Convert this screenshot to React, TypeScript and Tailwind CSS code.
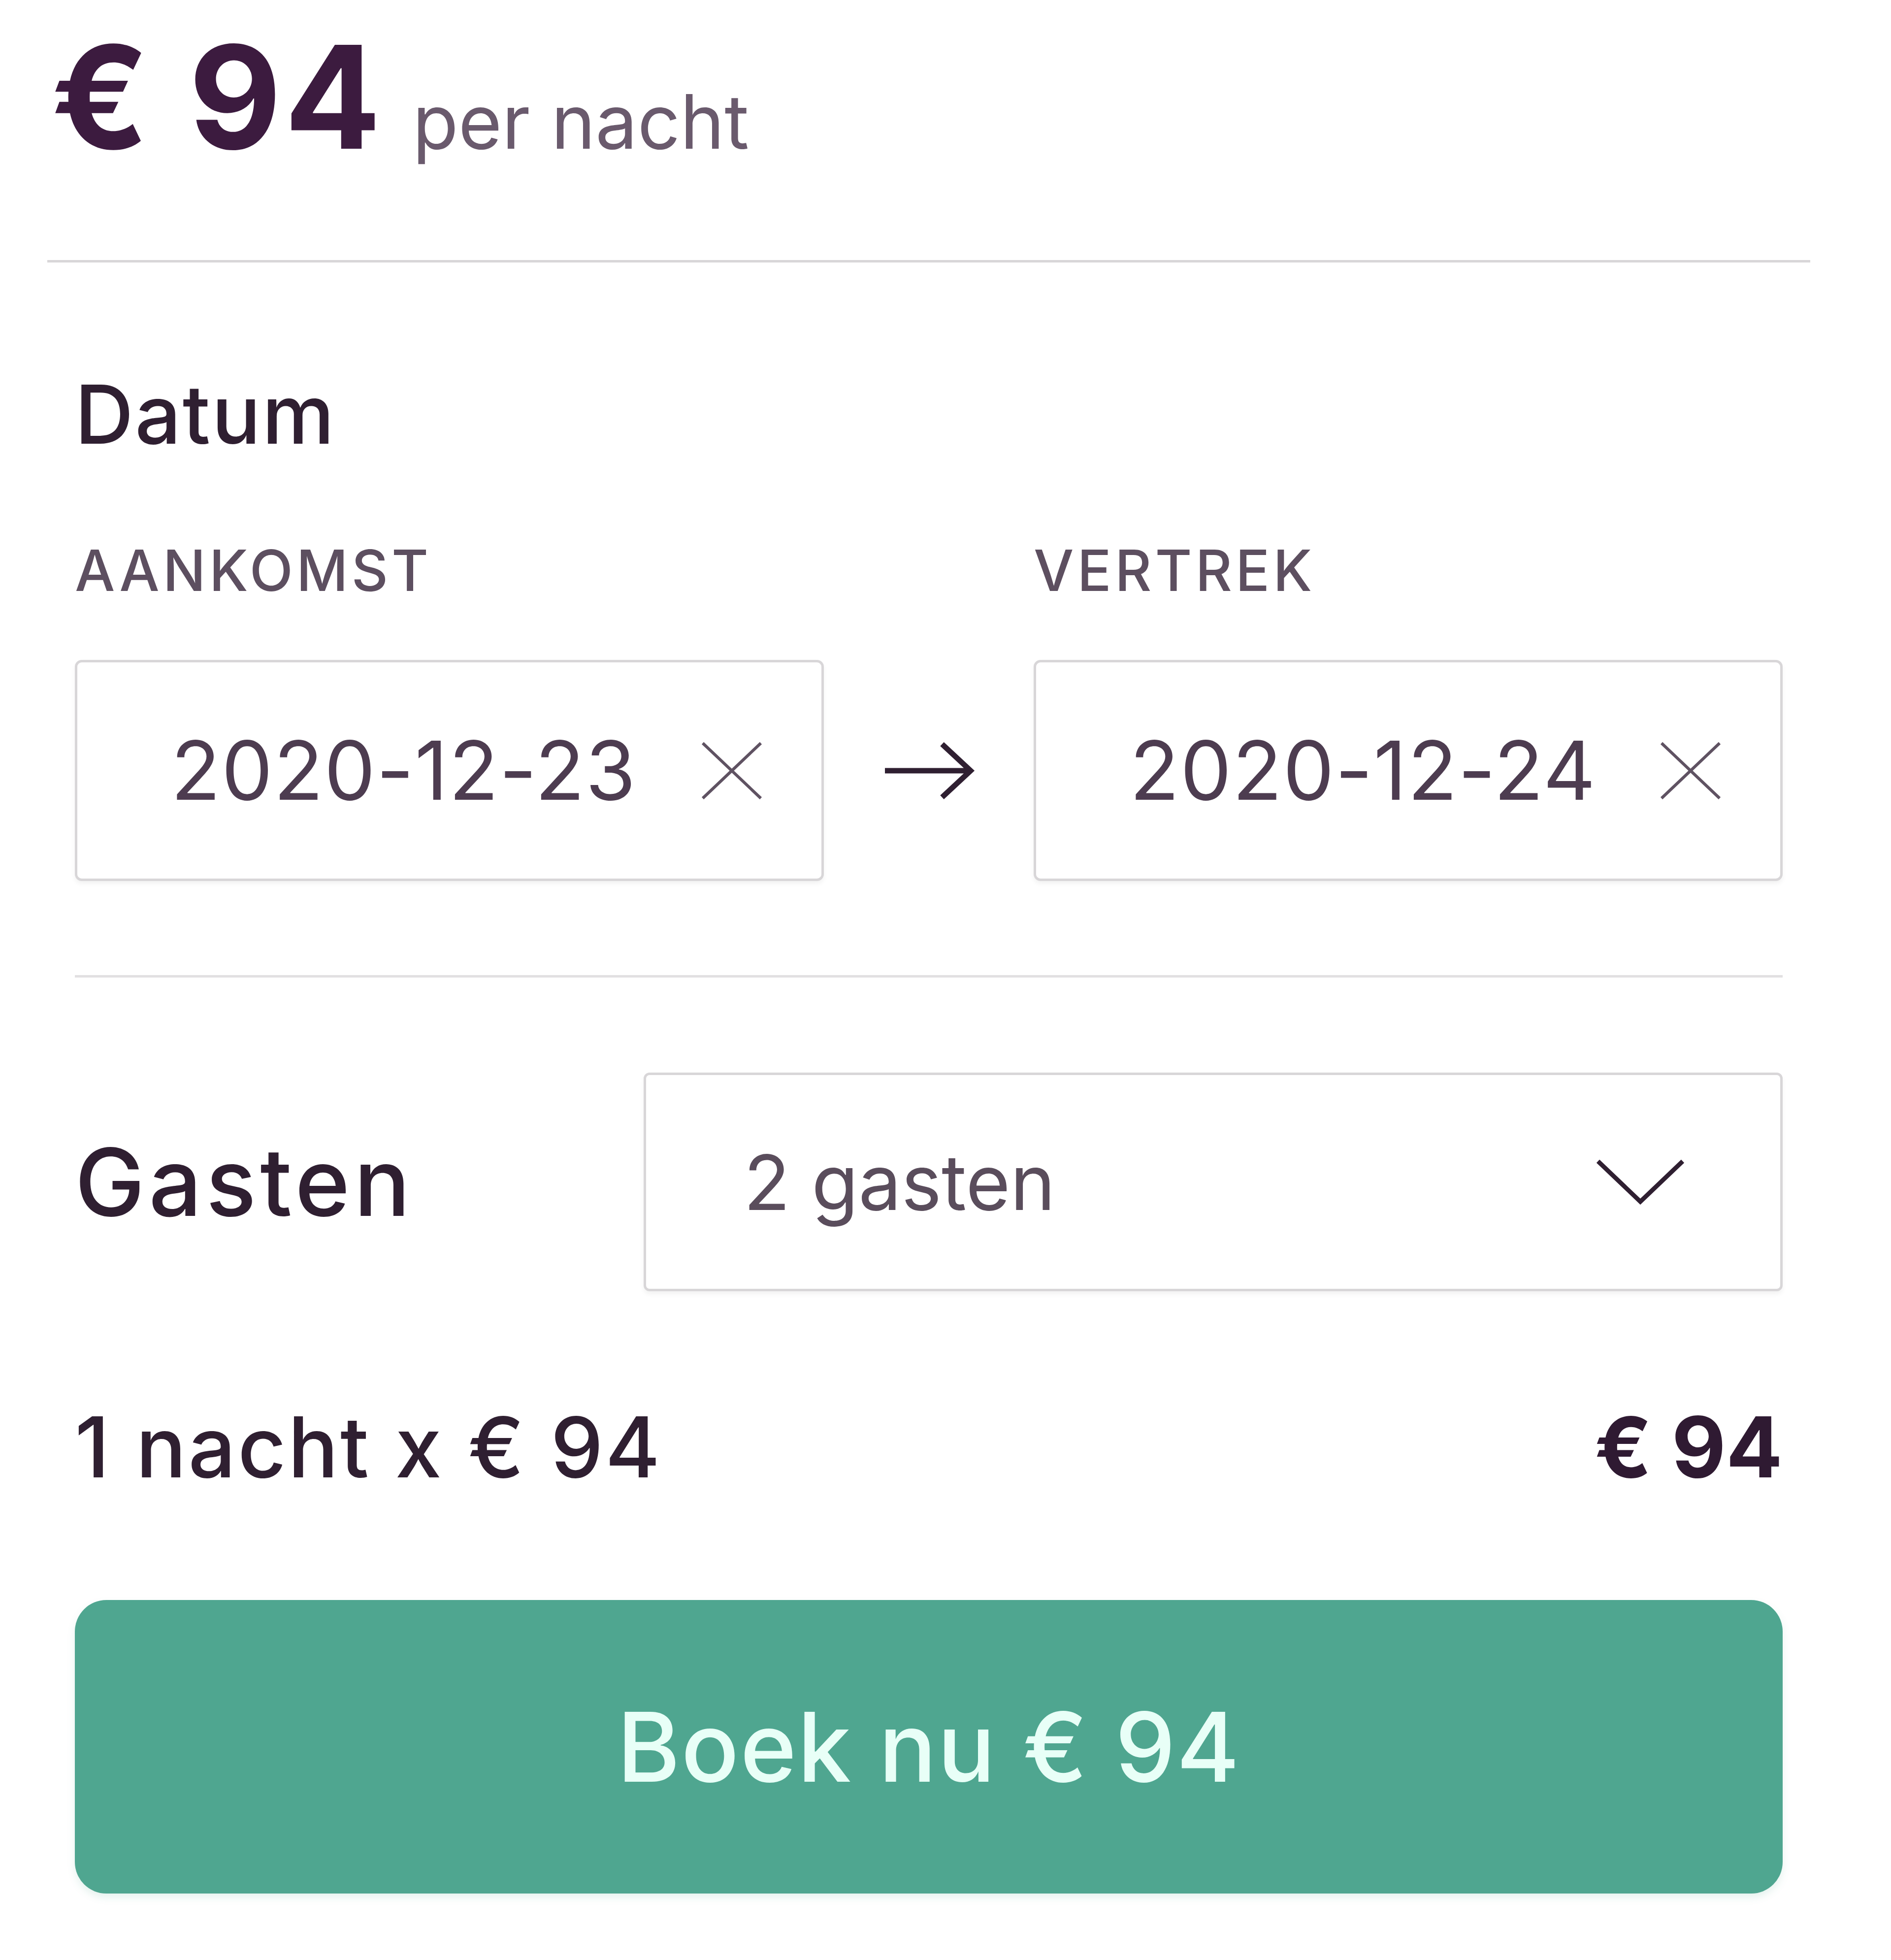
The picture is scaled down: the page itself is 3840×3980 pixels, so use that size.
import React from 'react';

const DateInput = ({ value }: { value: string }) => (
  <div className="flex h-[449px] items-center justify-between rounded-[14px] border-[5px] border-[#d8d6d8] bg-white pl-[190px] pr-[115px] shadow-[0_6px_10px_rgba(0,0,0,0.05)]">
    <span className="text-[165px] leading-none tracking-[2px] text-[#4d3c50]">{value}</span>
    <svg width="134" height="124" viewBox="0 0 134 124" className="text-[#5f5262]">
      <path d="M8 6 L126 118 M126 6 L8 118" stroke="currentColor" strokeWidth="6" fill="none" />
    </svg>
  </div>
);

export default function App() {
  return (
    <div className="h-[3980px] w-[3840px] bg-white pt-[52px] font-['Inter',sans-serif]">
      <div className="ml-[96px] w-[3580px]">
        <div className="flex items-baseline gap-[58px] pl-[8px]">
          <span className="text-[290px] font-bold leading-none tracking-[6px] text-[#3c1b3f]">€ 94</span>
          <span className="text-[152px] leading-none text-[#6a5a6d]">per nacht</span>
        </div>

        <div className="mt-[186px] h-[5px] bg-[#d8d6d8]" />

        <div className="px-[56px]">
          <h2 className="mt-[226px] text-[165px] font-medium leading-none tracking-[3px] text-[#2f1f31]">Datum</h2>

          <div className="mt-[177px] grid grid-cols-[1fr_426px_1fr]">
            <span className="text-[115px] font-medium leading-none tracking-[7px] text-[#5d4f60]">AANKOMST</span>
            <span />
            <span className="text-[115px] font-medium leading-none tracking-[7px] text-[#5d4f60]">VERTREK</span>
          </div>

          <div className="mt-[124px] grid grid-cols-[1fr_426px_1fr] items-center">
            <DateInput value="2020-12-23" />
            <div className="flex justify-center">
              <svg width="190" height="124" viewBox="0 0 190 124" className="text-[#2f1f31]">
                <path d="M6 62 H178 M122 8 L180 62 L122 116" stroke="currentColor" strokeWidth="11" fill="none" />
              </svg>
            </div>
            <DateInput value="2020-12-24" />
          </div>

          <div className="mt-[191px] h-[5px] bg-[#e2e0e2]" />

          <div className="mt-[193px] flex items-center">
            <span className="w-[1155px] text-[190px] font-medium leading-none tracking-[8px] text-[#2f1f31]">Gasten</span>
            <div className="flex h-[444px] flex-1 items-center justify-between rounded-[12px] border-[5px] border-[#d8d6d8] bg-white pl-[198px] pr-[192px] shadow-[0_6px_10px_rgba(0,0,0,0.05)]">
              <span className="text-[155px] leading-none text-[#5a4d5c]">2 gasten</span>
              <svg width="184" height="96" viewBox="0 0 184 96" className="text-[#2f1f31]">
                <path d="M6 6 L92 88 L178 6" stroke="currentColor" strokeWidth="9" fill="none" />
              </svg>
            </div>
          </div>

          <div className="mt-[231px] flex items-baseline justify-between">
            <span className="text-[170px] font-medium leading-none tracking-[4px] text-[#2f1f31]">1 nacht x € 94</span>
            <span className="text-[170px] font-bold leading-none text-[#2f1a32]">€ 94</span>
          </div>

          <button className="mt-[226px] flex h-[596px] w-full items-center justify-center rounded-[64px] bg-[#4fa690] shadow-[0_8px_16px_rgba(79,166,144,0.15)]">
            <span className="text-[195px] font-medium leading-none tracking-[2px] text-[#e8fff7]">Boek nu € 94</span>
          </button>
        </div>
      </div>
    </div>
  );
}
